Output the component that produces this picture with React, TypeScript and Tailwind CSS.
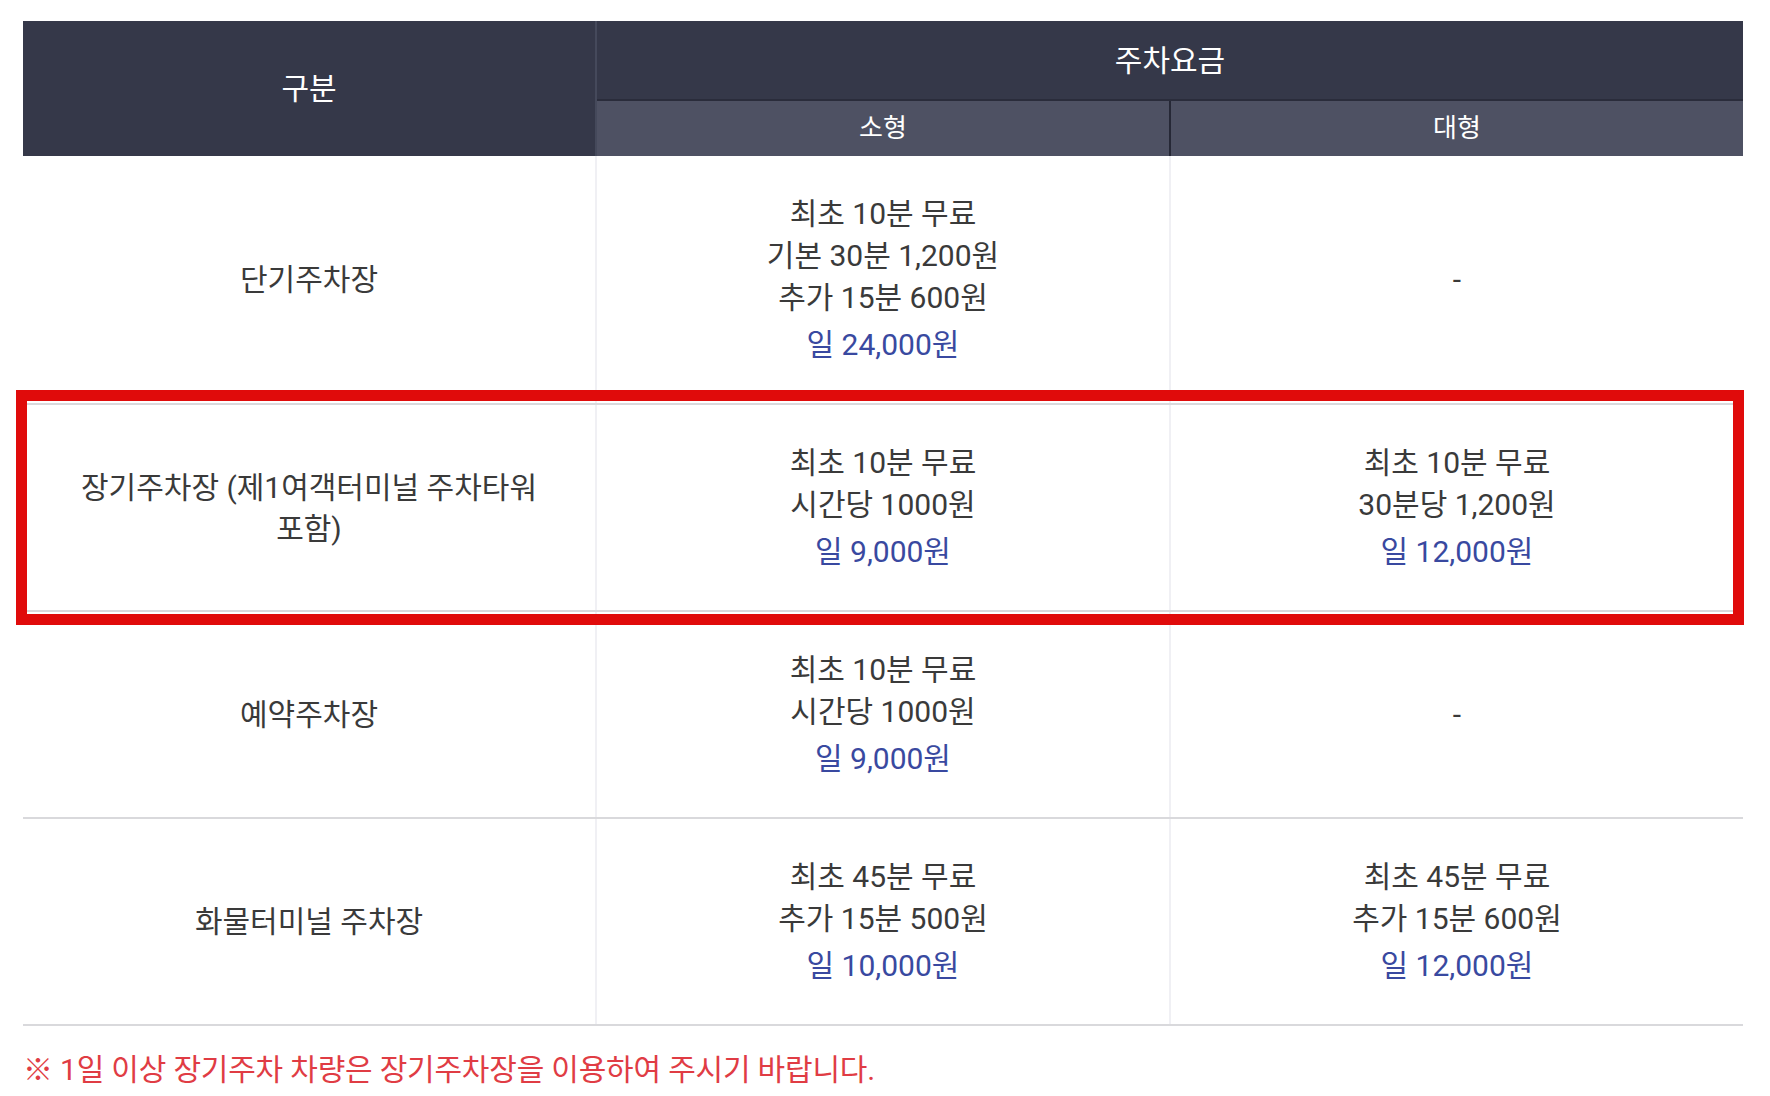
import React from "react";

const font = { fontFamily: 'Roboto, "Noto Sans CJK KR", sans-serif' };

function Lines({ lines, day }: { lines: string[]; day?: string }) {
  return (
    <div className="flex flex-col items-center text-[30px] leading-[42px] text-[#3a3a3a]">
      {lines.map((l, i) => (
        <div key={i}>{l}</div>
      ))}
      {day && <div className="mt-[5px] text-[#3949a0]">{day}</div>}
    </div>
  );
}

function Row({
  name,
  small,
  large,
  first,
  last,
}: {
  name: React.ReactNode;
  small: React.ReactNode;
  large: React.ReactNode;
  first?: boolean;
  last?: boolean;
}) {
  return (
    <div
      className={
        "flex " +
        (first ? "" : "border-t-2 border-[#d9d9dc] ") +
        (last ? "border-b-2 border-[#a9a9af]" : "")
      }
    >
      <div className="w-[574px] border-r-2 border-[#f0f0f4] flex items-center justify-center py-[37px] px-[30px] text-center text-[30px] leading-[41px] text-[#3a3a3a]">
        {name}
      </div>
      <div className="w-[574px] border-r-2 border-[#f0f0f4] flex items-center justify-center py-[37px]">
        {small}
      </div>
      <div className="w-[572px] flex items-center justify-center py-[37px]">{large}</div>
    </div>
  );
}

export default function App() {
  return (
    <div className="relative w-[1770px] h-[1096px] bg-white" style={font}>
      <div className="pt-[21px] ml-[23px] w-[1720px]">
        {/* Header */}
        <div className="flex">
          <div className="w-[574px] h-[135px] bg-[#353849] border-r-2 border-[#45495b] flex items-center justify-center text-white text-[30px]">
            구분
          </div>
          <div className="w-[1146px] flex flex-col">
            <div className="h-[78px] bg-[#353849] flex items-center justify-center text-white text-[30px]">
              주차요금
            </div>
            <div className="h-[2px] bg-[#2a2c3b]" />
            <div className="h-[55px] flex bg-[#4e5163] text-white text-[26px]">
              <div className="w-[574px] border-r-2 border-[#262836] flex items-center justify-center">
                소형
              </div>
              <div className="w-[572px] flex items-center justify-center">대형</div>
            </div>
          </div>
        </div>

        {/* Body */}
        <Row
          first
          name="단기주차장"
          small={
            <Lines
              lines={["최초 10분 무료", "기본 30분 1,200원", "추가 15분 600원"]}
              day="일 24,000원"
            />
          }
          large={<div className="text-[30px] text-[#3a3a3a]">-</div>}
        />
        <Row
          name={
            <span>
              장기주차장 (제1여객터미널 주차타워
              <br />
              포함)
            </span>
          }
          small={<Lines lines={["최초 10분 무료", "시간당 1000원"]} day="일 9,000원" />}
          large={<Lines lines={["최초 10분 무료", "30분당 1,200원"]} day="일 12,000원" />}
        />
        <Row
          name="예약주차장"
          small={<Lines lines={["최초 10분 무료", "시간당 1000원"]} day="일 9,000원" />}
          large={<div className="text-[30px] text-[#3a3a3a]">-</div>}
        />
        <Row
          last
          name="화물터미널 주차장"
          small={<Lines lines={["최초 45분 무료", "추가 15분 500원"]} day="일 10,000원" />}
          large={<Lines lines={["최초 45분 무료", "추가 15분 600원"]} day="일 12,000원" />}
        />

        <div className="mt-[23px] text-[30px] leading-[42px] tracking-[-0.2px] text-[#e03c44]">
          ※ 1일 이상 장기주차 차량은 장기주차장을 이용하여 주시기 바랍니다.
        </div>
      </div>

      {/* Highlight box */}
      <div className="absolute left-[16px] top-[390px] w-[1728px] h-[235px] border-[11px] border-[#e00b0b] pointer-events-none" />
    </div>
  );
}
